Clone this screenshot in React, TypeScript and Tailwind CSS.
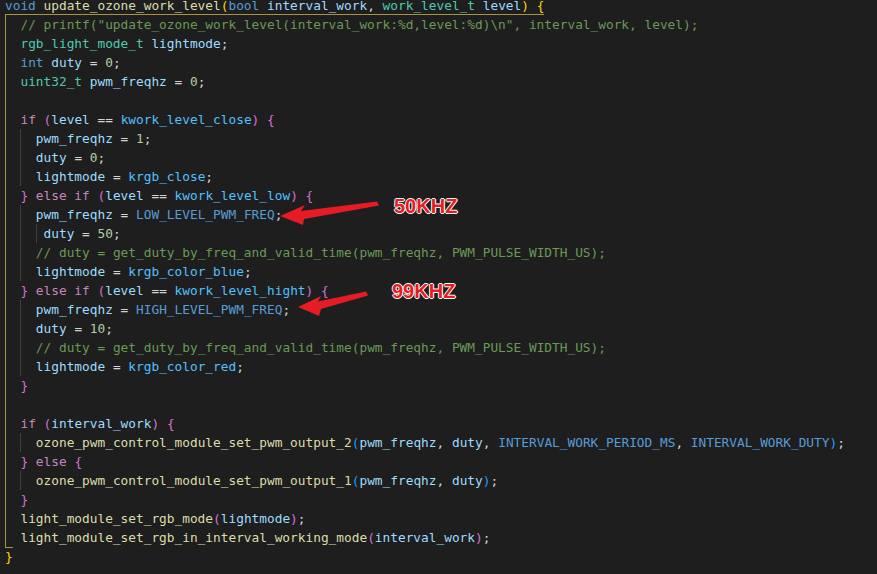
type Tok = [string, string];
type Line = { indent: number; guides: string[]; toks: Tok[]; cls?: string };

// token colours (vscode dark+)
const KW = "text-[#569cd6]";
const FN = "text-[#dcdcaa]";
const VA = "text-[#9cdcfe]";
const TY = "text-[#4ec9b0]";
const EN = "text-[#4fc1ff]";
const NU = "text-[#b5cea8]";
const CM = "text-[#6a9955]";
const PU = "text-[#d4d4d4]";
const CT = "text-[#c586c0]";
const B1 = "text-[#ffd700]";
const B2 = "text-[#da70d6]";
const B3 = "text-[#179fff]";

const GOLD = "shadow-[inset_1px_0_0_#a89440]";
const GRAY = "shadow-[inset_1px_0_0_#404040]";

const body = (indent: number, toks: Tok[], inner = false): Line => ({
  indent,
  guides: inner ? (indent > 4 ? [GOLD, GRAY, GRAY] : [GOLD, GRAY]) : [GOLD],
  toks,
});

const lines: Line[] = [
  {
    indent: 0,
    guides: [],
    cls: "shadow-[inset_0_-1px_0_#a89440]",
    toks: [
      ["void ", KW],
      ["update_ozone_work_level", FN],
      ["(", B1],
      ["bool ", KW],
      ["interval_work", VA],
      [", ", PU],
      ["work_level_t ", TY],
      ["level", VA],
      [")", B1],
      [" ", PU],
      ["{", B1],
    ],
  },
  body(2, [['// printf("update_ozone_work_level(interval_work:%d,level:%d)\\n", interval_work, level);', CM]]),
  body(2, [["rgb_light_mode_t ", TY], ["lightmode", VA], [";", PU]]),
  body(2, [["int ", KW], ["duty", VA], [" = ", PU], ["0", NU], [";", PU]]),
  body(2, [["uint32_t ", TY], ["pwm_freqhz", VA], [" = ", PU], ["0", NU], [";", PU]]),
  body(2, []),
  body(2, [["if ", CT], ["(", B2], ["level", VA], [" == ", PU], ["kwork_level_close", EN], [")", B2], [" ", PU], ["{", B2]]),
  body(4, [["pwm_freqhz", VA], [" = ", PU], ["1", NU], [";", PU]], true),
  body(4, [["duty", VA], [" = ", PU], ["0", NU], [";", PU]], true),
  body(4, [["lightmode", VA], [" = ", PU], ["krgb_close", EN], [";", PU]], true),
  body(2, [["}", B2], [" else if ", CT], ["(", B2], ["level", VA], [" == ", PU], ["kwork_level_low", EN], [")", B2], [" ", PU], ["{", B2]]),
  body(4, [["pwm_freqhz", VA], [" = ", PU], ["LOW_LEVEL_PWM_FREQ", KW], [";", PU]], true),
  body(5, [["duty", VA], [" = ", PU], ["50", NU], [";", PU]], true),
  body(4, [["// duty = get_duty_by_freq_and_valid_time(pwm_freqhz, PWM_PULSE_WIDTH_US);", CM]], true),
  body(4, [["lightmode", VA], [" = ", PU], ["krgb_color_blue", EN], [";", PU]], true),
  body(2, [["}", B2], [" else if ", CT], ["(", B2], ["level", VA], [" == ", PU], ["kwork_level_hight", EN], [")", B2], [" ", PU], ["{", B2]]),
  body(4, [["pwm_freqhz", VA], [" = ", PU], ["HIGH_LEVEL_PWM_FREQ", KW], [";", PU]], true),
  body(4, [["duty", VA], [" = ", PU], ["10", NU], [";", PU]], true),
  body(4, [["// duty = get_duty_by_freq_and_valid_time(pwm_freqhz, PWM_PULSE_WIDTH_US);", CM]], true),
  body(4, [["lightmode", VA], [" = ", PU], ["krgb_color_red", EN], [";", PU]], true),
  body(2, [["}", B2]]),
  body(2, []),
  body(2, [["if ", CT], ["(", B2], ["interval_work", VA], [")", B2], [" ", PU], ["{", B2]]),
  body(
    4,
    [
      ["ozone_pwm_control_module_set_pwm_output_2", FN],
      ["(", B3],
      ["pwm_freqhz", VA],
      [", ", PU],
      ["duty", VA],
      [", ", PU],
      ["INTERVAL_WORK_PERIOD_MS", KW],
      [", ", PU],
      ["INTERVAL_WORK_DUTY", KW],
      [")", B3],
      [";", PU],
    ],
    true
  ),
  body(2, [["}", B2], [" else ", CT], ["{", B2]]),
  body(
    4,
    [
      ["ozone_pwm_control_module_set_pwm_output_1", FN],
      ["(", B3],
      ["pwm_freqhz", VA],
      [", ", PU],
      ["duty", VA],
      [")", B3],
      [";", PU],
    ],
    true
  ),
  body(2, [["}", B2]]),
  body(2, [["light_module_set_rgb_mode", FN], ["(", B2], ["lightmode", VA], [")", B2], [";", PU]]),
  body(2, [["light_module_set_rgb_in_interval_working_mode", FN], ["(", B2], ["interval_work", VA], [")", B2], [";", PU]]),
  { indent: 0, guides: [], cls: "shadow-[inset_0_1px_0_#a89440]", toks: [["}", B1]] },
];

function CodeLine({ line }: { line: Line }) {
  // leading whitespace split in 2-col chunks so indent guides can sit on them
  const chunks: string[] = [];
  let left = Math.max(line.indent, line.guides.length ? 2 : 0);
  while (left > 0) {
    chunks.push(left >= 2 ? "  " : " ");
    left -= 2;
  }
  return (
    <div className="flex h-[19px] whitespace-pre">
      {chunks.map((c, i) => (
        <span key={i} className={line.guides[i] ?? ""}>
          {c}
        </span>
      ))}
      <span className={`flex ${line.cls ?? ""}`}>
        {line.toks.map(([text, color], i) => (
          <span key={i} className={color}>
            {text}
          </span>
        ))}
      </span>
    </div>
  );
}

export default function App() {
  return (
    <div className="relative w-[877px] h-[574px] overflow-hidden bg-[#1e1e1e]">
      <div className="-mt-[4px] pl-[5px] font-['DejaVu_Sans_Mono',monospace] text-[12.8px] leading-[19px] text-[#d4d4d4]">
        {lines.map((l, i) => (
          <CodeLine key={i} line={l} />
        ))}
      </div>

      {/* annotation arrows */}
      <svg className="absolute left-0 top-0" width="877" height="574" viewBox="0 0 877 574">
        <polygon
          points="280,216 305,205 301,211 377,201.5 379,205.5 304,219 303,225"
          fill="#e51c23"
        />
        <polygon
          points="298,307 321,296 318,301.5 366,291.5 368,295.5 321,309 319,316"
          fill="#e51c23"
        />
      </svg>

      <span className="absolute left-[394px] top-[196px] font-['Liberation_Sans',Arial,sans-serif] text-[20px] leading-[20px] font-bold text-[#e51c23] [text-shadow:1px_0_0_#fff,-1px_0_0_#fff,0_1px_0_#fff,0_-1px_0_#fff]">
        50KHZ
      </span>
      <span className="absolute left-[392px] top-[281px] font-['Liberation_Sans',Arial,sans-serif] text-[20px] leading-[20px] font-bold text-[#e51c23] [text-shadow:1px_0_0_#fff,-1px_0_0_#fff,0_1px_0_#fff,0_-1px_0_#fff]">
        99KHZ
      </span>
    </div>
  );
}
